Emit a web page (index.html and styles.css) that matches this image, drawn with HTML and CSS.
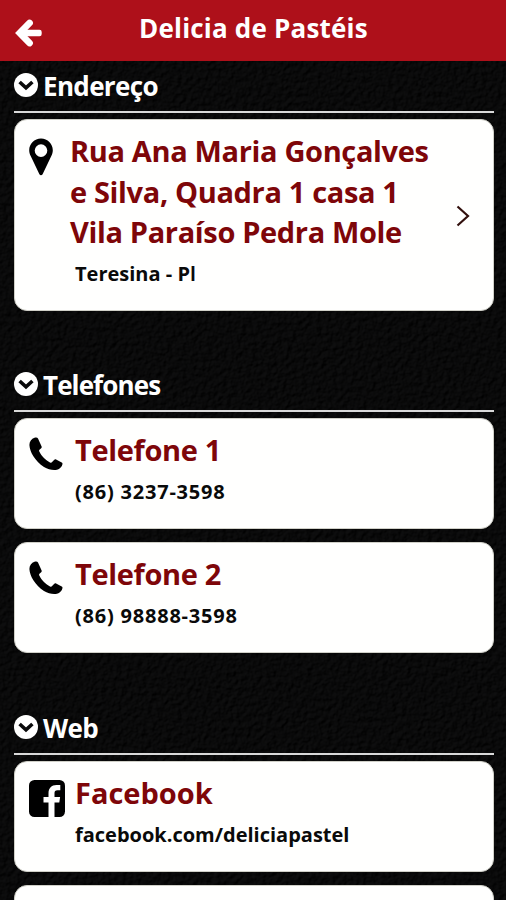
FILE: index.html
```html
<!DOCTYPE html>
<html lang="pt-BR">
<head>
<meta charset="utf-8">
<title>Delicia de Pastéis</title>
<link rel="stylesheet" href="styles.css">
</head>
<body>
<svg class="texture" width="506" height="900" aria-hidden="true">
  <filter id="grain" x="0" y="0" width="100%" height="100%" color-interpolation-filters="sRGB">
    <feTurbulence type="fractalNoise" baseFrequency="0.2" numOctaves="3" seed="8" result="n"/>
    <feDiffuseLighting in="n" surfaceScale="2" diffuseConstant="0.062" lighting-color="#f4f6ff">
      <feDistantLight azimuth="225" elevation="40"/>
    </feDiffuseLighting>
  </filter>
  <rect width="506" height="900" filter="url(#grain)"/>
</svg>
<svg width="0" height="0" class="defs" aria-hidden="true">
  <symbol id="chev" viewBox="0 0 24 24"><circle cx="12" cy="12" r="12" fill="#fff"/><path d="M5.600 9l6.400 5.900L18.400 9" fill="none" stroke="#0a0a0b" stroke-width="3.600"/></symbol>
  <symbol id="phone" viewBox="0 0 34 34"><path d="M5.500.7C2.500 1.800.4 4.400.4 8c.1 3 1.500 7.300 3.800 11 2.600 4.200 6.400 8.200 10.800 10.900 4.200 2.600 9 3.600 13 2.800 2.800-.6 5.100-3.100 5.500-5.700.1-.7-.1-1.200-.8-1.600l-5.600-2.900c-.8-.4-1.300-.3-1.800.3l-2.200 2.300c-.6.6-1.200.7-2.100.3-4.100-1.700-8.400-6.200-10.700-10.800-.4-.9-.3-1.500.4-2.100l1.500-1.300c.6-.6.7-1.200.3-2L9 1.500C8.500.5 7.300.1 5.500.7z"/></symbol>
</svg>
<header class="bar">
  <svg class="back" width="28" height="28" viewBox="0 0 28 28"><path d="M14.500 4L4.800 14l9.700 10" fill="none" stroke="#fff" stroke-width="6.800" stroke-linecap="round"/><path d="M6 10.700h18.500q2.200 0 2.200 2.200v2.200q0 2.200-2.200 2.200H6z" fill="#fff"/></svg>
  <h1 class="title">Delicia de Pastéis</h1>
</header>
<main class="content">
  <section class="group">
    <h2 class="heading"><svg width="24" height="24"><use href="#chev"/></svg><span class="h-end">Endereço</span></h2>
    <div class="card address">
      <svg class="icon" width="24" height="38" viewBox="0 0 24 38"><path fill-rule="evenodd" d="M12 .5C5.400.5.200 5.700.200 12.200c0 2.200.6 4 1.500 5.900l8.700 18.100c.7 1.500 2.500 1.500 3.200 0l8.700-18.100c.9-1.900 1.500-3.700 1.500-5.900C23.800 5.700 18.600.5 12 .5zM12 6.300a6.300 6.300 0 1 1 0 12.600 6.300 6.300 0 0 1 0-12.600z"/></svg>
      <div class="body">
        <h3 class="name">Rua Ana Maria Gonçalves<br>e Silva, Quadra 1 casa 1<br>Vila Paraíso Pedra Mole</h3>
        <p class="detail">Teresina - P<span class="plain-i">I</span></p>
      </div>
      <svg class="arrow" width="14" height="22" viewBox="0 0 14 22"><path d="M1.500 1.500L12 11 1.500 20.500" fill="none" stroke="#32100d" stroke-width="2.200"/></svg>
    </div>
  </section>
  <section class="group phones">
    <h2 class="heading"><svg width="24" height="24"><use href="#chev"/></svg><span class="h-tel">Telefones</span></h2>
    <div class="card">
      <svg class="icon" width="34" height="34"><use href="#phone"/></svg>
      <div class="body"><h3 class="name">Telefone 1</h3><p class="detail number">(86) 3237-3598</p></div>
    </div>
    <div class="card">
      <svg class="icon" width="34" height="34"><use href="#phone"/></svg>
      <div class="body"><h3 class="name">Telefone 2</h3><p class="detail number">(86) 98888-3598</p></div>
    </div>
  </section>
  <section class="group last">
    <h2 class="heading"><svg width="24" height="24"><use href="#chev"/></svg><span class="h-web">Web</span></h2>
    <div class="card">
      <svg class="icon" width="36" height="37" viewBox="0 0 36 37"><rect width="36" height="37" rx="5.500"/><path d="M19.500 37V22.500H14.500V17h5v-3.500C19.500 8 22.500 5 27.500 5h3.800v5.300h-2.800c-2.300 0-3 1-3 3V17h5.600l-.8 5.500h-4.800V37z" fill="#fff"/></svg>
      <div class="body"><h3 class="name wide">Facebook</h3><p class="detail">facebook.com/deliciapastel</p></div>
    </div>
    <div class="card cut"></div>
  </section>
</main>
</body>
</html>
```

FILE: styles.css
```css
* { box-sizing: border-box; }
body {
  margin: 0;
  height: 900px;
  overflow: hidden;
  position: relative;
  background: #09090a;
  color: #0a0a0a;
  font-family: "Open Sans", "Noto Sans", sans-serif;
}
h1, h2, h3, p { margin: 0; }
svg { display: block; flex: none; }
.texture { position: absolute; left: 0; top: 0; z-index: -1; }
.defs { position: absolute; }

.bar {
  height: 61px;
  background: #ae101a;
  display: grid;
  grid-template-columns: 139px 1fr;
  align-items: start;
}
.back { margin: 19px 0 0 15px; }
.title {
  color: #fff;
  font-size: 26px;
  line-height: 36px;
  padding-top: 10px;
  white-space: nowrap;
  letter-spacing: 0.2px;
}

.content { padding: 0 12px 0 14px; }
.group { height: 299px; }
.phones { height: 343px; }
.last { height: 197px; overflow: hidden; }
.heading {
  height: 52px;
  border-bottom: 2px solid #d9d9d9;
  display: flex;
  align-items: flex-start;
  gap: 5px;
  color: #fff;
  font-size: 26px;
  line-height: 34px;
  white-space: nowrap;
}
.heading svg { margin-top: 12px; }
.heading span { margin-top: 8px; }
.h-end { letter-spacing: -0.65px; }
.h-tel { letter-spacing: -0.9px; }
.h-web { letter-spacing: -0.6px; }
.card {
  display: grid;
  grid-template-columns: 46px 1fr 38px;
  align-items: start;
  height: 111px;
  margin-bottom: 13px;
  padding-left: 14px;
  background: #fffffe;
  border: 1px solid #d0d0c8;
  border-radius: 13px;
}
.heading + .card { margin-top: 6px; }
.address { height: 192px; }
.cut { margin-bottom: 0; }
.icon { margin-top: 18px; }
.body {
  padding-top: 11px;
  white-space: nowrap;
}
.name {
  color: #7e0609;
  font-size: 29px;
  line-height: 40.5px;
  letter-spacing: -0.35px;
}
.wide { letter-spacing: 0; }
.address .name { margin-left: -5px; }
.detail {
  font-size: 20px;
  line-height: 27px;
  margin-top: 7px;
  font-weight: 700;
}
.number { letter-spacing: 0.78px; }
.plain-i { font-family: Lato, sans-serif; }
.arrow { margin-top: 85px; margin-left: 1px; }
```
